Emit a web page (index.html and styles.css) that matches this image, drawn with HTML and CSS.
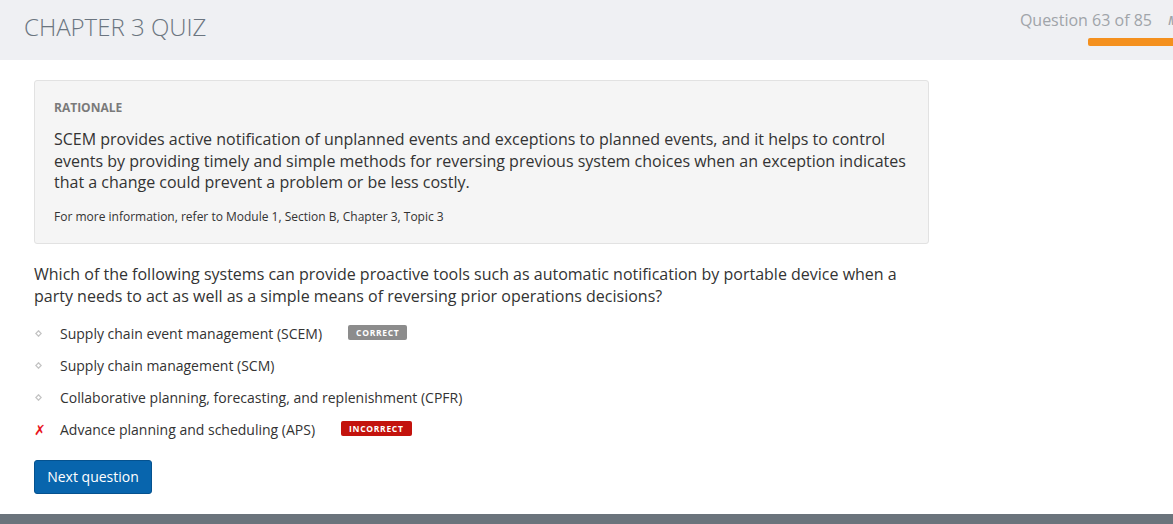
FILE: index.html
```html
<!DOCTYPE html>
<html>
<head>
<meta charset="utf-8">
<link rel="stylesheet" href="styles.css">
</head>
<body>
<header class="top">
  <h1 class="title">CHAPTER 3 QUIZ</h1>
  <div class="progress">
    <div class="progress-row"><span class="count">Question 63 of 85</span><span class="menu">M</span></div>
    <div class="bar"></div>
  </div>
</header>
<main class="content">
  <section class="rationale">
    <h2 class="r-label">RATIONALE</h2>
    <p class="r-text">SCEM provides active notification of unplanned events and exceptions to planned events, and it helps to control events by providing timely and simple methods for reversing previous system choices when an exception indicates that a change could prevent a problem or be less costly.</p>
    <p class="r-ref">For more information, refer to Module 1, Section B, Chapter 3, Topic 3</p>
  </section>
  <p class="question">Which of the following systems can provide proactive tools such as automatic notification by portable device when a party needs to act as well as a simple means of reversing prior operations decisions?</p>
  <ul class="options">
    <li class="opt"><span class="mark"><svg width="7" height="7" viewBox="0 0 7 7"><path d="M3.5 0.8 L6.2 3.5 L3.5 6.2 L0.8 3.5 Z" fill="none" stroke="#c4c4c4" stroke-width="1.3"/></svg></span><span class="opt-text">Supply chain event management (SCEM)</span><span class="badge correct">CORRECT</span></li>
    <li class="opt"><span class="mark"><svg width="7" height="7" viewBox="0 0 7 7"><path d="M3.5 0.8 L6.2 3.5 L3.5 6.2 L0.8 3.5 Z" fill="none" stroke="#c4c4c4" stroke-width="1.3"/></svg></span><span class="opt-text">Supply chain management (SCM)</span></li>
    <li class="opt"><span class="mark"><svg width="7" height="7" viewBox="0 0 7 7"><path d="M3.5 0.8 L6.2 3.5 L3.5 6.2 L0.8 3.5 Z" fill="none" stroke="#c4c4c4" stroke-width="1.3"/></svg></span><span class="opt-text">Collaborative planning, forecasting, and replenishment (CPFR)</span></li>
    <li class="opt"><span class="mark cross">✗</span><span class="opt-text">Advance planning and scheduling (APS)</span><span class="badge incorrect">INCORRECT</span></li>
  </ul>
  <button class="next">Next question</button>
</main>
<footer class="foot"></footer>
</body>
</html>
```
FILE: styles.css
```css
* { box-sizing: border-box; }
html, body { margin: 0; padding: 0; }
body {
  font-family: "Open Sans", "Liberation Sans", sans-serif;
  color: #333;
  background: #fff;
  width: 1173px;
  height: 524px;
  overflow: hidden;
  position: relative;
}
.top {
  height: 60px;
  background: #eff0f3;
  display: flex;
  justify-content: space-between;
  align-items: flex-start;
  overflow: hidden;
}
.title {
  margin: 12px 0 0 24px;
  font-weight: 300;
  font-size: 24px;
  line-height: 30px;
  color: #6b7580;
  letter-spacing: 0;
}
.progress {
  display: flex;
  flex-direction: column;
  align-items: flex-end;
  width: 160px;
  margin-right: -5px;
}
.progress-row {
  margin-top: 9px;
  display: flex;
  gap: 16px;
  white-space: nowrap;
}
.count {
  font-size: 16px;
  line-height: 22px;
  color: #a0a4a9;
}
.menu {
  font-size: 13px;
  line-height: 22px;
  font-style: italic;
  font-weight: 600;
  color: #a0a4a9;
  width: 10px;
  overflow: hidden;
}
.bar {
  margin-top: 7px;
  width: 90px;
  height: 8px;
  background: #f4901e;
  border-radius: 2px 0 0 2px;
  align-self: flex-end;
}
.content {
  padding: 20px 0 0 34px;
  width: 929px;
}
.rationale {
  background: #f5f5f5;
  border: 1px solid #e2e2e2;
  border-radius: 3px;
  padding: 18px 20px 18px 19px;
}
.r-label {
  margin: 0;
  font-size: 12px;
  line-height: 17px;
  font-weight: 700;
  color: #7a7a7a;
}
.r-text {
  margin: 13px 0 0 0;
  font-size: 16px;
  line-height: 21.5px;
  color: #333;
}
.r-ref {
  margin: 14px 0 0 0;
  font-size: 12px;
  line-height: 17px;
  color: #333;
}
.question {
  margin: 19px 0 0 0;
  font-size: 16px;
  line-height: 22px;
  color: #333;
}
.options {
  list-style: none;
  margin: 11px 0 0 0;
  padding: 0;
}
.opt {
  display: flex;
  align-items: center;
  height: 32px;
  font-size: 14px;
  color: #333;
}
.mark {
  width: 26px;
  display: flex;
  align-items: center;
  padding-left: 1px;
}
.cross {
  color: #e8141c;
  font-size: 14px;
  font-weight: 700;
  font-style: italic;
  padding-left: 0;
  font-family: "DejaVu Sans", sans-serif;
}
.opt-text { line-height: 20px; }
.badge {
  margin-left: 26px;
  font-size: 8.5px;
  font-weight: 700;
  letter-spacing: 0.7px;
  color: #fff;
  height: 15px;
  line-height: 15px;
  padding: 0 8px;
  border-radius: 2px;
  margin-top: -3px;
}
.correct { background: #8c8c8c; }
.incorrect { background: #c3130d; }
.next {
  margin-top: 14px;
  font-family: "Open Sans", "Liberation Sans", sans-serif;
  font-size: 14px;
  color: #fff;
  background: #0865ad;
  border: 1px solid #05528f;
  border-radius: 3px;
  width: 118px;
  height: 34px;
  padding: 0;
  cursor: pointer;
}
.foot {
  position: absolute;
  left: 0;
  right: 0;
  bottom: 0;
  height: 10px;
  background: #6b747c;
}
```
